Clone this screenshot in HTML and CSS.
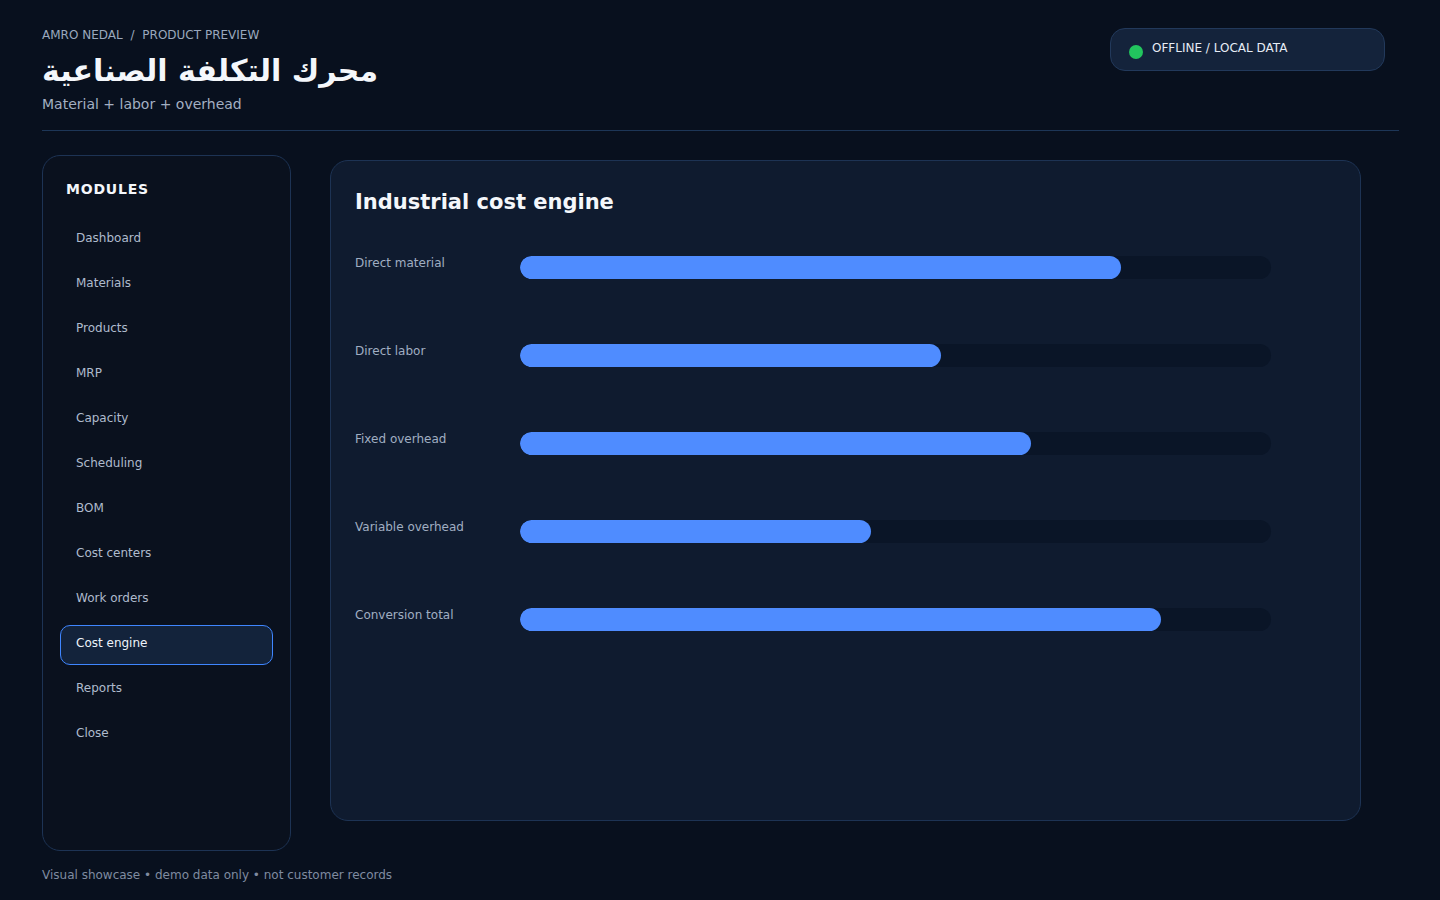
FILE: index.html
```html
<!DOCTYPE html>
<html>
<head>
<meta charset="UTF-8" />
<meta name="viewport" content="width=device-width, initial-scale=1" />
<title>Cost engine - Product preview</title>
<link rel="stylesheet" href="styles.css">
</head>
<body>

<header class="top">
  <div class="top-left">
    <p class="crumbs">AMRO NEDAL <span class="sep">/</span> PRODUCT PREVIEW</p>
    <h1 class="title">محرك التكلفة الصناعية</h1>
    <p class="subtitle">Material + labor + overhead</p>
  </div>
  <div class="pill">
    <span class="dot"></span>
    <span>OFFLINE / LOCAL DATA</span>
  </div>
</header>

<div class="layout">
  <aside class="sidebar">
    <h2 class="side-head">MODULES</h2>
    <nav class="nav">
      <a class="nav-item">Dashboard</a>
      <a class="nav-item">Materials</a>
      <a class="nav-item">Products</a>
      <a class="nav-item">MRP</a>
      <a class="nav-item">Capacity</a>
      <a class="nav-item">Scheduling</a>
      <a class="nav-item">BOM</a>
      <a class="nav-item">Cost centers</a>
      <a class="nav-item">Work orders</a>
      <a class="nav-item active">Cost engine</a>
      <a class="nav-item">Reports</a>
      <a class="nav-item">Close</a>
    </nav>
  </aside>

  <main class="panel">
    <h2 class="panel-title">Industrial cost engine</h2>
    <div class="rows">
      <div class="row">
        <span class="label">Direct material</span>
        <div class="track"><div class="fill" style="width: 80%"></div></div>
      </div>
      <div class="row">
        <span class="label">Direct labor</span>
        <div class="track"><div class="fill" style="width: 56%"></div></div>
      </div>
      <div class="row">
        <span class="label">Fixed overhead</span>
        <div class="track"><div class="fill" style="width: 68%"></div></div>
      </div>
      <div class="row">
        <span class="label">Variable overhead</span>
        <div class="track"><div class="fill" style="width: 46.8%"></div></div>
      </div>
      <div class="row">
        <span class="label">Conversion total</span>
        <div class="track"><div class="fill" style="width: 85.4%"></div></div>
      </div>
    </div>
  </main>
</div>

<footer class="foot">Visual showcase • demo data only • not customer records</footer>

</body>
</html>
```

FILE: styles.css
```css
* { box-sizing: border-box; }
body {
  font-family: "DejaVu Sans", sans-serif;
  background: #08101e;
  color: #e8eef8;
  margin: 0;
  padding: 27px 41px 0 42px;
}
.top {
  display: flex;
  justify-content: space-between;
  align-items: flex-start;
  border-bottom: 1px solid #1d3657;
  padding-bottom: 16px;
}
.crumbs {
  margin: 0;
  font-size: 12px;
  line-height: 16px;
  color: #9aa8bd;
}
.crumbs .sep { margin: 0 4px; }
.title {
  margin: 8px 0 0;
  font-family: "DejaVu Sans";
  font-size: 30px;
  line-height: 40px;
  font-weight: bold;
  color: #f4f7fb;
}
.subtitle {
  margin: 3px 0 0;
  font-size: 14px;
  line-height: 20px;
  color: #a3afc2;
}
.pill {
  display: flex;
  align-items: flex-start;
  gap: 9px;
  width: 275px;
  height: 43px;
  margin: 1px 14px 0 0;
  padding: 11px 18px;
  background: #14233b;
  border: 1px solid #22395b;
  border-radius: 15px;
  font-size: 12px;
  line-height: 16px;
  color: #e6ecf5;
}
.dot {
  width: 14px;
  height: 14px;
  margin-top: 5px;
  border-radius: 50%;
  background: #22c55e;
  flex: none;
}
.layout {
  display: grid;
  grid-template-columns: 249px 1031px;
  column-gap: 39px;
  align-items: start;
  margin-top: 24px;
}
.sidebar {
  height: 696px;
  padding: 23px 17px;
  background: #0a111e;
  border: 1px solid #1d3354;
  border-radius: 18px;
}
.side-head {
  margin: 0 0 21px;
  padding: 0 6px;
  font-size: 14px;
  line-height: 20px;
  letter-spacing: 0.8px;
  color: #f4f7fb;
}
.nav {
  display: flex;
  flex-direction: column;
  gap: 5px;
}
.nav-item {
  display: block;
  height: 40px;
  padding: 9px 15px 0;
  border: 1px solid transparent;
  border-radius: 10px;
  font-size: 12px;
  line-height: 16px;
  color: #afbbcd;
}
.nav-item.active {
  background: #13233b;
  border-color: #3f86ff;
  color: #eef3fa;
}
.panel {
  margin-top: 5px;
  height: 661px;
  padding: 25px 24px 24px;
  background: #0f1b2f;
  border: 1px solid #1d3354;
  border-radius: 18px;
}
.panel-title {
  margin: 0;
  font-size: 21px;
  line-height: 32px;
  color: #f4f7fb;
}
.rows { margin-top: 36px; }
.row {
  display: grid;
  grid-template-columns: 165px 751px;
  align-items: start;
  height: 88px;
}
.label {
  margin-top: 1px;
  font-size: 12px;
  line-height: 16px;
  color: #a0aec2;
}
.track {
  margin-top: 2px;
  height: 23px;
  background: #0a1527;
  border-radius: 12px;
  overflow: hidden;
}
.fill {
  height: 100%;
  background: #4f8cff;
  border-radius: 12px;
}
.foot {
  margin-top: 16px;
  font-size: 12px;
  line-height: 16px;
  color: #7f8ba0;
}
```
